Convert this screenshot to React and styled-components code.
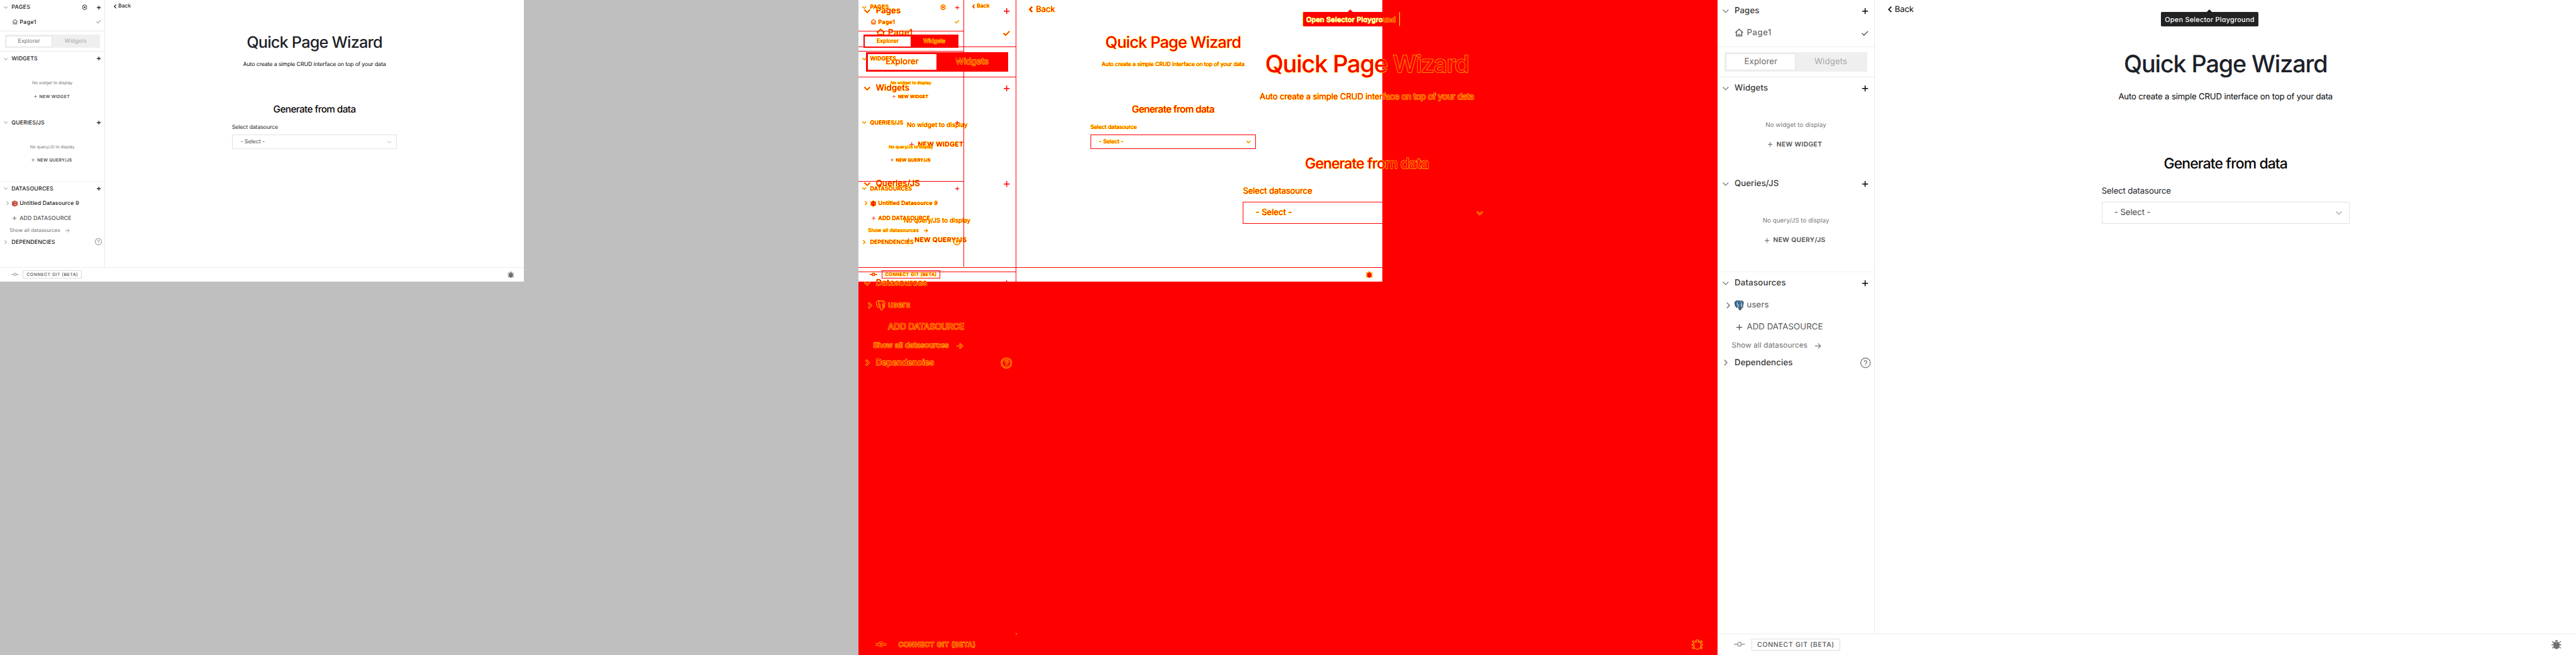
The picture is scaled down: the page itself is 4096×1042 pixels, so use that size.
import React from "react";
import styled, { createGlobalStyle, css, ThemeProvider, useTheme } from "styled-components";

/* One layout unit; each screen sets --u so the same layout renders at 1x or 1.5x. */
const u = (n) => `calc(var(--u) * ${n})`;
const BASE = 4096 / 6300;
const RED = "#ff0000";
const YELLOW = "#ffff00";

const ink = (normal) => ({ theme }) => (theme.diff ? RED : normal);

const GlobalStyle = createGlobalStyle`
  html, body { margin: 0; padding: 0; background: #fff; }
  *, *::before, *::after { box-sizing: border-box; }
`;

const Comparison = styled.div`
  display: grid;
  grid-template-columns: repeat(3, minmax(0, 1fr));
  width: 4096px;
  height: 1042px;
  overflow: hidden;
  font-family: Inter, "Liberation Sans", sans-serif;
  text-rendering: geometricPrecision;
`;

const Panel = styled.section`
  display: grid;
  align-items: start;
  justify-items: start;
  min-width: 0;
  overflow: hidden;
  background: ${(p) => p.$bg};
  > * { grid-area: 1 / 1; }
`;

const Frame = styled.div`
  --u: ${(p) => BASE * p.$scale}px;
  display: flex;
  flex-direction: column;
  position: relative;
  width: ${(p) => p.$w * BASE}px;
  height: ${(p) => p.$h * BASE}px;
  overflow: hidden;
  background: ${({ theme }) => (theme.diff ? "transparent" : "#fff")};
`;

const SharedArea = styled.div`
  width: ${1281 * BASE}px;
  height: ${689 * BASE}px;
  background: #fff;
`;

const Body = styled.div`
  display: flex;
  flex: 1;
  min-height: 0;
`;

const Sidebar = styled.aside`
  display: flex;
  flex-direction: column;
  flex: none;
  width: ${u(257.2)};
  border-right: 1px solid ${ink("#eaeaea")};
`;

const Block = styled.div`
  flex: none;
  height: ${(p) => u(p.$h)};
  border-bottom: ${(p) => (p.$last ? 0 : 1)}px solid ${(p) => (p.theme.diff ? RED : p.$soft ? "#f2f2f2" : "#ececec")};
`;

const Text = styled.span`
  white-space: pre;
  font-size: ${(p) => u(p.$size || 13.6)};
  font-weight: ${(p) => p.$weight || 400};
  letter-spacing: ${(p) => u(p.$ls || 0)};
  color: ${(p) => (p.theme.diff ? p.$diffColor || RED : p.$color)};
  ${({ theme }) => theme.diff && css`
    -webkit-text-stroke: 1px ${YELLOW};
    paint-order: stroke fill;
  `}
`;

const Row = styled.div`
  display: flex;
  align-items: center;
  height: ${u(36)};
  padding-right: ${u(6.8)};
  line-height: ${u(20)};
  > ${Text} { padding-top: ${u(0.6)}; }
`;

const Slot = styled.span`
  display: flex;
  flex: none;
  align-items: center;
  justify-content: center;
  width: ${(p) => u(p.$w)};
  margin-right: ${(p) => u(p.$mr || 0)};
`;

const Spacer = styled.span`
  flex: 1;
`;

const Svg = styled.svg`
  display: block;
  flex: none;
  overflow: visible;
  width: ${(p) => u(p.$w)};
  height: ${(p) => u(p.$h)};
`;

/* Stroked icon; in the diff theme it gets a yellow halo under the red stroke. */
function Stroke({ w, h, d, color, sw = 1.3, halo = true, children }) {
  const { diff } = useTheme();
  const shape = d ? <path d={d} /> : children;
  return (
    <Svg $w={w} $h={h} viewBox={`0 0 ${w} ${h}`} fill="none">
      {diff && halo && <g stroke={YELLOW} strokeWidth={sw + 1.3}>{shape}</g>}
      <g stroke={diff ? RED : color} strokeWidth={sw}>{shape}</g>
    </Svg>
  );
}

const FillSvg = styled(Svg)`
  paint-order: stroke;
`;

function Fill({ w, h, vb, color, sw = 2, children }) {
  const { diff } = useTheme();
  return (
    <FillSvg $w={w} $h={h} viewBox={vb} fill={diff ? RED : color} stroke={diff ? YELLOW : "none"} strokeWidth={sw}>
      {children}
    </FillSvg>
  );
}

const ChevronDown = ({ color = "#7d7a7a" }) => <Stroke w={10} h={6} d="M.5 .6 5 5 9.5 .6" color={color} sw={1.4} />;
const ChevronRight = () => <Stroke w={6} h={10} d="M.8 .5 5.2 5 .8 9.5" color="#7d7a7a" sw={1.5} />;
const Plus = ({ color, size = 9.6, sw = 1.6 }) => (
  <Stroke w={size} h={size} d={`M0 ${size / 2}H${size}M${size / 2} 0V${size}`} color={color} sw={sw} halo={false} />
);
const Check = () => <Stroke w={11} h={8} d="M.5 3.8 4 7.2 10.6 .6" color="#4b4848" sw={1.3} />;
const Arrow = () => <Stroke w={10} h={9} d="M0 4.5H9M5 .4 9.2 4.5 5 8.6" color="#716e6e" sw={1.1} />;
const Help = () => (
  <Stroke w={17} h={17} color="#6d6d6d" sw={1.3}>
    <circle cx="8.5" cy="8.5" r="7.8" />
    <path d="M6.3 7.1a2.2 2.2 0 1 1 3.4 1.8c-.8.5-1.2.8-1.2 1.7M8.5 11.6v1.3" />
  </Stroke>
);
const Gear = () => (
  <Stroke w={14} h={14} color="#191919" sw={1.4}>
    <path d="M5.6 1.2h2.8l.8 1.5 1.7-.1 1.4 2.4-.8 1.5v1l.8 1.5-1.4 2.4-1.7-.1-.8 1.5H5.6l-.8-1.5-1.7.1L1.7 9l.8-1.5v-1L1.7 5l1.4-2.4 1.7.1z" strokeLinejoin="round" />
    <circle cx="7" cy="7" r="1.3" strokeWidth={1.6} />
  </Stroke>
);
const Home = () => (
  <Fill w={15} h={15} vb="0 0 24 24" color="#393939" sw={1.8}>
    <path d="M19 21H5a1 1 0 0 1-1-1v-9H1l10.327-9.388a1 1 0 0 1 1.346 0L23 11h-3v9a1 1 0 0 1-1 1zM6 19h12V9.157l-6-5.454-6 5.454V19zm2-4h8v2H8v-2z" />
  </Fill>
);
const GitCommit = () => (
  <Stroke w={18} h={8} color="#a9a7a7" sw={1.8}>
    <path d="M0 4H5.6M12.4 4H18" />
    <circle cx="9" cy="4" r="3" />
  </Stroke>
);
const Bug = () => (
  <Fill w={16} h={15} vb="0 0 24 22" color="#716e6e" sw={2.4}>
    <path d="M8.6 3.8a3.6 3.8 0 0 1 7.2 0zM5 5h14.6v10.5A7.3 6.5 0 0 1 5 15.5zM0 10.7h5v2.2H0zM19.6 10.7H24v2.2h-4.4zM1.8 2.6 6.2 5.6 5.2 7.4.8 4.3zM22.4 2.6 18 5.6l1 1.8 4.4-3.1zM.8 19.2 5 16l1.2 1.9-4.2 3zM23.4 19.2 19.2 16 18 17.9l4.2 3z" />
  </Fill>
);

function S3Logo() {
  const { diff } = useTheme();
  if (diff) {
    return (
      <Svg $w={14} $h={15} viewBox="0 0 14 15" fill={RED} stroke={YELLOW} strokeWidth="1">
        <path d="M.5 2 4 3V1.2L7 0l3 1.2V3l3.5-1v11L10 12v1.8L7 15l-3-1.2V12L.5 13z" />
        <path d="M4 4v7M10 4v7M6 6l2.5 1L6 9" fill="none" strokeWidth=".8" />
      </Svg>
    );
  }
  return (
    <Svg $w={14} $h={15} viewBox="0 0 14 15">
      <path fill="#8c3123" d="M.3 2.6 1.5 2v11L.3 12.4zM13.7 2.6 12.5 2v11l1.2-.6z" />
      <path fill="#e05243" d="M1.500 2 5 2.900v9.200L1.500 13zM12.500 2 9 2.900v9.200l3.500.9z" />
      <path fill="#8c3123" d="M4 1.3 7 0v4.3L4 5zM4 10l3 .7V15l-3-1.3zM4 5.7l3-.3v4.2l-3-.3z" />
      <path fill="#e05243" d="M7 0l3 1.3V5l-3-.7zM7 10.700l3-.7v3.700L7 15zM7 5.400l3 .3v3.600l-3 .3z" />
    </Svg>
  );
}

function PostgresLogo() {
  const { diff } = useTheme();
  const body = diff ? RED : "#336791";
  const edge = diff ? YELLOW : "#26323c";
  const inner = diff ? YELLOW : "#fff";
  return (
    <Svg $w={15} $h={16} viewBox="0 0 30 32" strokeLinejoin="round" strokeLinecap="round">
      <path fill={body} stroke={edge} strokeWidth="1.8" d="M8.5 1.2C4 1 1 3.500 1.100 9c.1 4 2.600 12.500 5.400 13.800 1.500.6 2.500-.8 3.600-2 .3 1.200 1.600 1.900 3.400 1.700.3 3 .2 8 4 8.500 4.200.4 4.800-3 4.900-8.200 3 .3 5.600-.6 6.500-2.200-1.200.2-3 .2-3.400-.5C28.200 15 30 7.500 28.300 4.400 26.500 1.200 21.500.8 18.500 1.900 15.500 1 12.500.8 10.500 1.700 9.900 1.400 9.200 1.300 8.500 1.200z" />
      <path fill="none" stroke={inner} strokeWidth="1.4" d="M10.500 2.500C7.500 5.500 8.600 11 8.500 14.500c.2 2 2 3 1.600 5.500M18.500 2.500c4 2.500 5.600 6.500 5.600 9.500.2 3-1.600 4.500.6 8M13.500 21.500c0-3.500.6-5-.6-7.500M8.500 11.500c2-1 4.200-.8 4.400 2.500M24 11c-2-.6-3.600.2-3.200 3 .3 2.600 1.500 4 1.600 6.500" />
    </Svg>
  );
}

const TabsWrap = styled.div`
  display: flex;
  height: ${u(32)};
  margin: ${u(8.3)} 0 0 ${u(12)};
  width: ${u(232)};
  padding: ${u(2)};
  background: ${ink("#efefef")};
`;

const Tab = styled.div`
  display: flex;
  flex: 1;
  align-items: center;
  justify-content: center;
  border: 1px solid ${(p) => (p.$active ? (p.theme.diff ? RED : "#e3e3e3") : "transparent")};
  background: ${(p) => (p.$active ? "#fff" : "transparent")};
`;

const Empty = styled.div`
  display: flex;
  flex-direction: column;
  align-items: center;
  height: ${u(120)};
  padding-top: ${u(34)};
  line-height: ${u(17)};
`;

const NewButton = styled.div`
  display: flex;
  align-items: center;
  gap: ${u(6.2)};
  height: ${u(20)};
  margin-top: ${u(13)};
  padding-right: ${u(2.5)};
`;

const ShowAll = styled.div`
  display: flex;
  align-items: center;
  gap: ${u(12.2)};
  height: ${u(22)};
  padding: ${u(2)} 0 0 ${u(23.5)};
  line-height: ${u(20)};
`;

const Main = styled.main`
  display: flex;
  flex: 1;
  flex-direction: column;
  align-items: center;
  min-width: 0;
`;

const BackLink = styled.div`
  display: flex;
  align-items: center;
  align-self: stretch;
  gap: ${u(4.8)};
  height: ${u(31)};
  padding-left: ${u(20.8)};
`;

const Line = styled.div`
  display: flex;
  align-items: center;
  justify-content: ${(p) => (p.$start ? "flex-start" : "center")};
  flex: none;
  height: ${(p) => u(p.$h)};
  margin-top: ${(p) => u(p.$mt)};
`;

const Field = styled.div`
  display: flex;
  flex-direction: column;
  width: ${u(404)};
  margin-top: ${u(20)};
`;

const SelectBox = styled.div`
  display: flex;
  align-items: center;
  justify-content: space-between;
  height: ${u(35.6)};
  margin-top: ${u(7.4)};
  padding: 0 ${u(11.6)} 0 ${u(19.6)};
  border: 1px solid ${ink("#e2e2e2")};
`;

const Footer = styled.footer`
  display: flex;
  align-items: flex-start;
  flex: none;
  height: ${(p) => u(p.$h)};
  padding: ${u(6.6)} ${u(24.3)} 0 ${u(27)};
  border-top: 1px solid ${ink("#ececec")};
`;

const FooterItem = styled.div`
  display: flex;
  align-items: center;
  height: ${u(20)};
`;

const GitButton = styled.div`
  display: flex;
  align-items: center;
  justify-content: center;
  width: ${u(144)};
  height: ${u(20)};
  margin-left: ${u(11)};
  border: 1px solid ${ink("#dcdcdc")};
`;

/* Corner where the moved sidebar edge meets the footer line. */
const Junction = styled.span`
  position: absolute;
  left: ${u(255.8)};
  bottom: ${u(33.6)};
  width: ${u(2)};
  height: 1px;
  background: ${YELLOW};
`;

const Tooltip = styled.div`
  position: absolute;
  top: ${u(19.4)};
  left: ${u(723.3)};
  display: flex;
  align-items: center;
  justify-content: center;
  width: ${u(158.8)};
  height: ${u(23.8)};
  border-radius: ${u(2)};
  border: solid ${({ theme }) => (theme.diff ? YELLOW : "#222")};
  border-width: 0 1px;
  background: ${ink("#222222")};
  &::before {
    content: "";
    position: absolute;
    bottom: 100%;
    left: 50%;
    margin-left: ${u(-5)};
    border: solid transparent;
    border-width: 0 ${u(5)} ${u(5)};
    border-bottom-color: ${ink("#151515")};
  }
`;

const TooltipText = styled(Text)`
  font-feature-settings: "cv11";
`;

const Beyond = styled.span`
  color: ${RED};
`;

function Header({ title, ls, open = true, gear, tone, action }) {
  return (
    <Row>
      <Slot $w={28}>{open ? <ChevronDown /> : <ChevronRight />}</Slot>
      <Text $weight={500} $ls={ls} $color={tone}>{title}</Text>
      <Spacer />
      {gear && <Slot $w={16} $mr={18}><Gear /></Slot>}
      <Slot $w={16}>{action || <Plus color="#090707" />}</Slot>
    </Row>
  );
}

function Entity({ icon, label, weight, ls, color, expandable, right }) {
  return (
    <Row>
      <Slot $w={7.6} />
      <Slot $w={20.4}>{expandable && <ChevronRight />}</Slot>
      <Slot $w={16} $mr={4}>{icon}</Slot>
      <Text $weight={weight} $ls={ls} $color={color}>{label}</Text>
      <Spacer />
      {right && <Slot $w={17.6}>{right}</Slot>}
    </Row>
  );
}

function EmptyState({ text, textLs, action, actionLs }) {
  return (
    <Empty>
      <Text $size={10.15} $ls={textLs} $color="#7b7878">{text}</Text>
      <NewButton>
        <Plus color="#5f5c5c" size={7.6} sw={1} />
        <Text $size={10.6} $weight={600} $ls={actionLs} $color="#514e4e">{action}</Text>
      </NewButton>
    </Empty>
  );
}

const BEFORE = {
  scale: 1, w: 1281, h: 689, footer: 35, gear: true, tone: "#191919",
  pages: ["PAGES", 0.43],
  page: { weight: 500, ls: 0.64, color: "#191919" },
  widgets: ["WIDGETS", 0.13],
  queries: ["QUERIES/JS", 0.22],
  datasources: ["DATASOURCES", 0.24],
  source: { icon: <S3Logo />, label: "Untitled Datasource 9", weight: 500, ls: 0.22, color: "#191919" },
  add: { weight: 500, ls: 0.19 },
  dependencies: ["DEPENDENCIES", 0.22],
};

const AFTER = {
  scale: 1.5, w: 2100, h: 1602, footer: 34.3, tone: "#393939", tooltip: true,
  pages: ["Pages", 0.1],
  page: { weight: 400, ls: 0.6, color: "#575757" },
  widgets: ["Widgets", 0.16],
  queries: ["Queries/JS", 0.06],
  datasources: ["Datasources", 0.21],
  source: { icon: <PostgresLogo />, label: "users", weight: 400, ls: 0.14, color: "#575757" },
  add: { weight: 400, ls: 0.05 },
  dependencies: ["Dependencies", 0.13],
};

function Screen({ data }) {
  const { diff } = useTheme();
  const hd = (k) => ({ title: data[k][0], ls: data[k][1], tone: data.tone });
  const ghost = diff && data.tooltip;
  return (
    <Frame $scale={data.scale} $w={data.w} $h={data.h}>
      <Body>
        <Sidebar>
          <Block $h={76.7}>
            <Header {...hd("pages")} gear={data.gear} />
            <Entity icon={<Home />} label="Page1" {...data.page} right={<Check />} />
          </Block>
          <Block $h={49.3}>
            <TabsWrap>
              <Tab $active><Text $ls={0.11} $color="#6d6d6d">Explorer</Text></Tab>
              <Tab><Text $ls={0.13} $color="#a9a7a7">Widgets</Text></Tab>
            </TabsWrap>
          </Block>
          <Block $h={318} $soft>
            <Header {...hd("widgets")} />
            <EmptyState text="No widget to display" textLs={0.07} action="NEW WIDGET" actionLs={0.39} />
            <Header {...hd("queries")} />
            <EmptyState text="No query/JS to display" textLs={0.03} action="NEW QUERY/JS" actionLs={0.35} />
          </Block>
          <Block $h={200} $last>
            <Header {...hd("datasources")} />
            <Entity {...data.source} expandable />
            <Entity icon={ghost ? null : <Plus color="#4b4848" sw={1.2} />} label="ADD DATASOURCE" color="#575757" {...data.add} />
            <ShowAll>
              <Text $size={12} $weight={400} $ls={0.14} $color="#716e6e">Show all datasources</Text>
              <Arrow />
            </ShowAll>
            <Header {...hd("dependencies")} open={false} action={<Help />} />
          </Block>
        </Sidebar>
        <Main>
          <BackLink>
            <Stroke w={6.4} h={10} d="M5.5 .6 1.3 5 5.5 9.4" color="#191919" sw={1.9} />
            <Text $size={13.4} $ls={-0.05} $color="#090707">Back</Text>
          </BackLink>
          <Line $h={48} $mt={50}><Text $size={38.8} $weight={500} $ls={-1.19} $color="#1d2129">Quick Page Wizard</Text></Line>
          <Line $h={20} $mt={19}><Text $ls={-0.205} $color="#090707">Auto create a simple CRUD interface on top of your data</Text></Line>
          <Line $h={30} $mt={84}><Text $size={23.6} $weight={500} $ls={-0.94} $color="#090707">Generate from data</Text></Line>
          <Field>
            <Line as="label" $h={20} $mt={0} $start>
              <Text $ls={-0.174} $color="#22262e">Select datasource</Text>
            </Line>
            <SelectBox>
              <Text $ls={-0.1} $color="#4b4848">- Select -</Text>
              <ChevronDown color="#a9a7a7" />
            </SelectBox>
          </Field>
        </Main>
      </Body>
      <Footer $h={data.footer}>
        <FooterItem><GitCommit /></FooterItem>
        <GitButton>
          <Text $size={10.8} $weight={500} $ls={0.72} $color="#575757">CONNECT GIT (BETA)</Text>
        </GitButton>
        <Spacer />
        <FooterItem><Bug /></FooterItem>
      </Footer>
      {diff && <Junction />}
      {data.tooltip && (
        <Tooltip>
          <TooltipText $size={11.2} $weight={500} $ls={0.23} $color="#fff" $diffColor="#fff">
            {diff ? <>Open Selector Playgro<Beyond>und</Beyond></> : "Open Selector Playground"}
          </TooltipText>
        </Tooltip>
      )}
    </Frame>
  );
}

export default function App() {
  return (
    <>
      <GlobalStyle />
      <Comparison>
        <ThemeProvider theme={{ diff: false }}>
          <Panel $bg="#bfbfbf"><Screen data={BEFORE} /></Panel>
        </ThemeProvider>
        <ThemeProvider theme={{ diff: true }}>
          <Panel $bg={RED}>
            <SharedArea />
            <Screen data={AFTER} />
            <Screen data={BEFORE} />
          </Panel>
        </ThemeProvider>
        <ThemeProvider theme={{ diff: false }}>
          <Panel $bg="#fff"><Screen data={AFTER} /></Panel>
        </ThemeProvider>
      </Comparison>
    </>
  );
}
